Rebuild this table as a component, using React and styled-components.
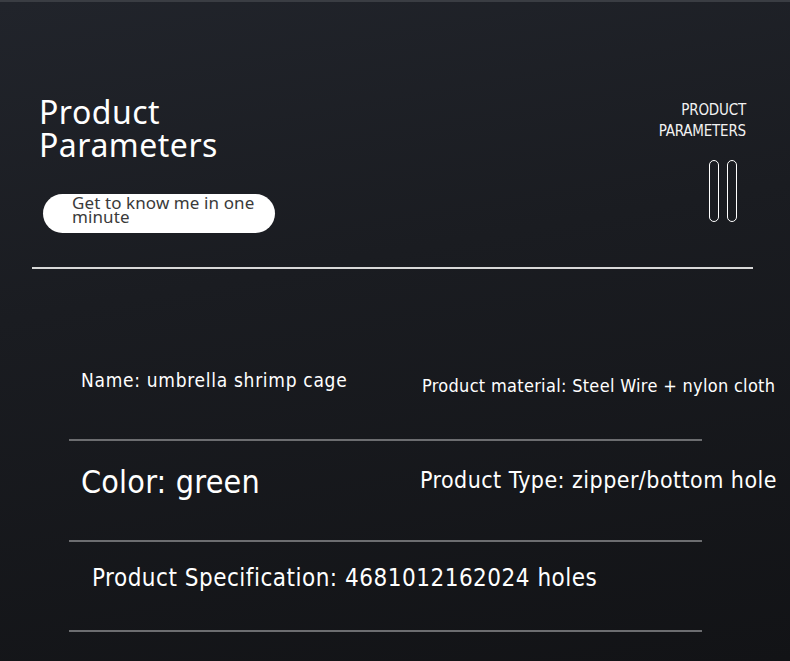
import styled, { createGlobalStyle } from "styled-components";

const GlobalStyle = createGlobalStyle`
  html, body {
    margin: 0;
    padding: 0;
    background: #131418;
  }
  #root {
    width: 790px;
    height: 661px;
    overflow: hidden;
  }
`;

const Page = styled.div`
  width: 790px;
  height: 661px;
  box-sizing: border-box;
  border-top: 2px solid #3a3d43;
  background: linear-gradient(170deg, #21242b 0%, #1a1c21 40%, #121316 100%);
  color: #fff;
  font-family: "Noto Sans", sans-serif;
`;

const Header = styled.header`
  display: flex;
  justify-content: space-between;
  padding: 93px 44px 0 39px;
  height: 265px;
  box-sizing: border-box;
`;

const TitleBlock = styled.div`
  display: flex;
  flex-direction: column;
`;

const Title = styled.h1`
  margin: 0;
  font-weight: 400;
  font-size: 32px;
  line-height: 33px;
  letter-spacing: 0.5px;
`;

const Pill = styled.div`
  flex-shrink: 0;
  margin: 33px 0 0 4px;
  width: 232px;
  height: 39px;
  box-sizing: border-box;
  border-radius: 20px;
  background: #fff;
  color: #3a3a3a;
  padding: 2px 0 0 29px;
  font-size: 17px;
  line-height: 14px;
  letter-spacing: 0.1px;
`;

const Side = styled.div`
  display: flex;
  flex-direction: column;
  align-items: flex-end;
  font-family: "DejaVu Sans Condensed", "Liberation Sans Narrow", sans-serif;
  font-size: 15px;
  line-height: 21px;
  padding-top: 5px;
  color: #f2f2f2;
  letter-spacing: -0.2px;
`;

const Bars = styled.div`
  display: flex;
  gap: 8px;
  margin-top: 18px;
  margin-right: 9px;
`;

const Bar = styled.span`
  width: 10px;
  height: 62px;
  box-sizing: border-box;
  border: 1.6px solid #fff;
  border-radius: 6px;
`;

const Rule = styled.hr`
  margin: 0 37px 0 32px;
  border: 0;
  height: 2px;
  background: #d8d8d8;
`;

const Table = styled.div`
  padding: 0 0 0 69px;
  font-family: "DejaVu Sans Condensed", "Liberation Sans Narrow", sans-serif;
`;

const Row = styled.div`
  display: flex;
  align-items: flex-start;
  width: 633px;
  height: ${({ $h }) => $h}px;
  box-sizing: border-box;
  border-bottom: 2px solid #6c6d70;
  padding: ${({ $pad }) => $pad};
  white-space: nowrap;
`;

const Cell = styled.div`
  font-size: ${({ $size }) => $size}px;
  letter-spacing: ${({ $ls }) => $ls ?? 0.2}px;
  width: ${({ $w }) => ($w ? `${$w}px` : "auto")};
  margin-top: ${({ $dy }) => $dy || 0}px;
  flex-shrink: 0;
`;

export default function App() {
  return (
    <>
      <GlobalStyle />
      <Page>
        <Header>
          <TitleBlock>
            <Title>
              Product
              <br />
              Parameters
            </Title>
            <Pill>
              Get to know me in one
              <br />
              minute
            </Pill>
          </TitleBlock>
          <Side>
            <span>PRODUCT</span>
            <span>PARAMETERS</span>
            <Bars>
              <Bar />
              <Bar />
            </Bars>
          </Side>
        </Header>
        <Rule />
        <Table>
          <Row $h={172} $pad="100px 0 0 12px">
            <Cell $size={19} $ls={0.7} $w={341}>
              Name: umbrella shrimp cage
            </Cell>
            <Cell $size={18} $ls={0.3} $dy={6}>
              Product material: Steel Wire + nylon cloth
            </Cell>
          </Row>
          <Row $h={101} $pad="22px 0 0 12px">
            <Cell $size={32} $w={339}>Color: green</Cell>
            <Cell $size={23} $ls={0.45} $dy={4}>
              Product Type: zipper/bottom hole
            </Cell>
          </Row>
          <Row $h={90} $pad="22px 0 0 23px">
            <Cell $size={24} $ls={0.5}>
              Product Specification: 4681012162024 holes
            </Cell>
          </Row>
        </Table>
      </Page>
    </>
  );
}
